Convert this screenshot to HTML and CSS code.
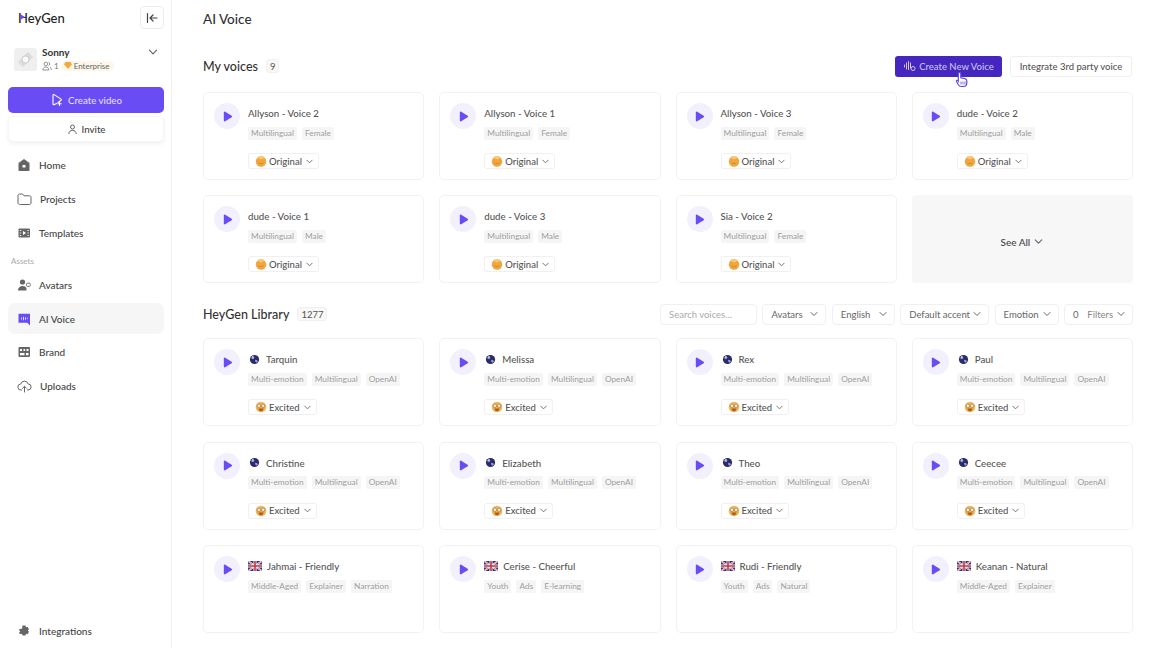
FILE: index.html
```html
<!DOCTYPE html>
<html lang="en">
<head>
<meta charset="utf-8">
<title>AI Voice - HeyGen</title>
<link rel="stylesheet" href="styles.css">
</head>
<body>
<svg class="defs" width="0" height="0" aria-hidden="true">
  <symbol id="play" viewBox="0 0 12 12"><path d="M2 1.600c0-.8.800-1.200 1.500-.8l7 4.400c.6.400.6 1.200 0 1.600l-7 4.400c-.7.400-1.500 0-1.500-.8z" fill="#6a4cf5"/></symbol>
  <symbol id="chev" viewBox="0 0 10 10"><path d="M2 3.500 5 6.500 8 3.500" fill="none" stroke="#666" stroke-width="1" stroke-linecap="round" stroke-linejoin="round"/></symbol>
  <symbol id="smile" viewBox="0 0 12 12"><circle cx="6" cy="6.500" r="5.200" fill="#f0a63c"/><path d="M2.400 2.800 3.800 1l2.200 1 2.200-1 1.400 1.800L6 4.400z" fill="#f7c878"/><path d="M3.500 7.800c1.400 1.200 3.600 1.200 5 0" fill="none" stroke="#c98428" stroke-width=".8"/></symbol>
  <symbol id="excited" viewBox="0 0 12 12"><circle cx="6" cy="6" r="5.300" fill="#f2b552"/><circle cx="3.900" cy="4.800" r="1.700" fill="#fff3d8" stroke="#8a6a40" stroke-width=".6"/><circle cx="8.100" cy="4.800" r="1.700" fill="#fff3d8" stroke="#8a6a40" stroke-width=".6"/><path d="M3.400 7.600h5.200C8.400 9.600 7 10.200 6 10.200s-2.400-.6-2.600-2.600z" fill="#a55a2a"/></symbol>
  <symbol id="globe" viewBox="0 0 12 12"><circle cx="6" cy="6" r="5" fill="#2c2a6b"/><path d="M2.500 3.500 5 2.600l1 1.600-1.500 1.400-1.700-.4zM6.600 6.400l2.400.4.800 1.400-1.800 1.400-1.200-1.400z" fill="#8fa3d8"/><circle cx="4.200" cy="3.200" r="1" fill="#c7cdea"/></symbol>
  <symbol id="flag" viewBox="0 0 14 10"><rect width="14" height="10" rx="1.200" fill="#27337a"/><path d="M0 0 14 10M14 0 0 10" stroke="#fff" stroke-width="1.800"/><path d="M0 0 14 10M14 0 0 10" stroke="#c8313e" stroke-width=".6"/><path d="M7 0v10M0 5h14" stroke="#fff" stroke-width="3"/><path d="M7 0v10M0 5h14" stroke="#c8313e" stroke-width="1.600"/></symbol>
</svg>
<div class="app">
  <aside class="sidebar">
    <div class="brandbar">
      <div class="logo">HeyGen<span class="logo-tri"></span></div>
      <button class="collapse"><svg width="14" height="14" viewBox="0 0 14 14"><path d="M2.500 2.500v9M12 7H5.500M8 4 5 7l3 3" fill="none" stroke="#444" stroke-width="1.200" stroke-linecap="round" stroke-linejoin="round"/></svg></button>
    </div>
    <div class="user">
      <div class="avatar"><svg width="23" height="23" viewBox="0 0 23 23"><rect width="23" height="23" fill="#efefef"/><path d="M14 4 19 9 9 19 4 14z" fill="#dcdcdc"/><circle cx="11.500" cy="11.500" r="3.600" fill="#fafafa" stroke="#c9c9c9"/></svg></div>
      <div class="user-info">
        <div class="user-name">Sonny</div>
        <div class="user-meta">
          <svg width="10" height="10" viewBox="0 0 10 10"><circle cx="3.800" cy="3" r="1.800" fill="none" stroke="#777" stroke-width=".8"/><path d="M.8 9c0-2 1.300-3 3-3s3 1 3 3zM6.500 1.300a1.800 1.800 0 0 1 0 3.400M8 6c.8.500 1.300 1.500 1.300 3" fill="none" stroke="#777" stroke-width=".8"/></svg>
          <span>1</span>
          <span class="plan"><svg width="8" height="7" viewBox="0 0 8 7"><path d="M1.500 0h5L8 2.200 4 7 0 2.200z" fill="#f4a93a"/></svg>Enterprise</span>
        </div>
      </div>
      <svg class="user-chev" width="12" height="12"><use href="#chev"/></svg>
    </div>
    <button class="create"><svg width="14" height="14" viewBox="0 0 14 14"><path d="M3 2.200c0-.6.600-.9 1.100-.6l7 4.500c.4.300.4.900 0 1.200L8 9.500M3 2.200V11c0 .6.500.9 1 .7l2.500-1.300" fill="none" stroke="#fff" stroke-width="1.100" stroke-linecap="round"/><path d="M9.500 9v3.400M7.800 10.700h3.400" stroke="#fff" stroke-width="1.100" stroke-linecap="round"/></svg>Create video</button>
    <button class="invite"><svg width="11" height="11" viewBox="0 0 11 11"><circle cx="5.500" cy="3" r="2" fill="none" stroke="#555" stroke-width=".9"/><path d="M1.800 10c0-2.400 1.600-3.600 3.700-3.600S9.200 7.600 9.200 10" fill="none" stroke="#555" stroke-width=".9"/></svg>Invite</button>
    <nav class="nav">
      <a class="nav-item"><svg width="14" height="14" viewBox="0 0 14 14"><path d="M7 1 1.500 5v7c0 .6.400 1 1 1h9c.6 0 1-.4 1-1V5z" fill="#666"/><rect x="5.500" y="7" width="3" height="2.500" rx=".5" fill="#fff"/></svg>Home</a>
      <a class="nav-item"><svg width="15" height="14" viewBox="0 0 15 14"><path d="M1 3.500c0-.8.600-1.500 1.500-1.500h3l1.500 1.800h5.500c.8 0 1.500.7 1.500 1.500v5.700c0 .8-.7 1.500-1.500 1.500h-9C1.600 12.500 1 11.800 1 11z" fill="none" stroke="#666" stroke-width="1"/></svg>Projects</a>
      <a class="nav-item"><svg width="14" height="14" viewBox="0 0 14 14"><rect x="1.500" y="2.500" width="11.500" height="9" rx="1" fill="#666"/><path d="M6 5v4l3-2z" fill="#fff"/><path d="M2.800 4.500h1.400M2.800 7h1.400M2.800 9.500h1.400M10.500 4.500h1.300M10.500 7h1.300M10.500 9.500h1.300" stroke="#fff" stroke-width=".9"/></svg>Templates</a>
      <div class="nav-label">Assets</div>
      <a class="nav-item"><svg width="14" height="14" viewBox="0 0 14 14"><circle cx="5.500" cy="4" r="2.600" fill="#666"/><path d="M1 12.500c0-3 2-4.500 4.500-4.500S9 9 9.500 10.500v2z" fill="#666"/><rect x="9.500" y="5.200" width="3.800" height="3.200" rx="1" fill="none" stroke="#666" stroke-width=".9"/></svg>Avatars</a>
      <a class="nav-item active"><svg width="14" height="14" viewBox="0 0 14 14"><path d="M1.500 1.800h11.500v11.700l-2.800-2.700H1.500z" fill="#6a4cf5"/><path d="M4.500 5.500v2M6.500 4.800v3.400M8.500 5.300v2.400M10.300 5.800v1.300" stroke="#fff" stroke-width=".8"/></svg>AI Voice</a>
      <a class="nav-item"><svg width="14" height="14" viewBox="0 0 14 14"><rect x="1.500" y="2" width="11.500" height="10" rx="1" fill="#666"/><path d="M3 4h2v2H3zM6.500 4h1.600v2H6.500zM9.500 4h2v2h-2zM3 8h4.500v2.300H3zM9 8h2.500v2.300H9z" fill="#fff"/></svg>Brand</a>
      <a class="nav-item"><svg width="15" height="14" viewBox="0 0 15 14"><path d="M4.500 11H4A3 3 0 0 1 3.700 5 3.900 3.900 0 0 1 11.200 5 3 3 0 0 1 11 11h-.5" fill="none" stroke="#666" stroke-width="1" stroke-linecap="round"/><path d="M7.500 13V7.500M5.500 9.300l2-2 2 2" fill="none" stroke="#666" stroke-width="1" stroke-linecap="round"/></svg>Uploads</a>
    </nav>
    <a class="nav-item bottom"><svg width="14" height="14" viewBox="0 0 14 14"><path d="M5.500 1.500h3l.4 1.700 1.600-.5 1.500 2.600-1.200 1.200 1.200 1.200-1.500 2.600-1.600-.5-.4 1.700h-3L5 9.800c-1.500.6-2.500 0-3-1l1.200-1.300L2 6c.5-1 1.500-1.600 3-1z" fill="#666"/></svg>Integrations</a>
  </aside>

  <main class="main">
    <h1 class="title">AI Voice</h1>

    <section>
      <div class="section-head head-one">
        <h2>My voices</h2><span class="count">9</span>
        <div class="actions">
          <button class="btn-primary"><svg width="14" height="12" viewBox="0 0 14 12"><path d="M1.500 5v2M3.500 3v6M5.500 1.500v8M7.500 3v5" stroke="#cfc6ff" stroke-width="1" stroke-linecap="round"/><circle cx="10" cy="8.500" r="2" fill="none" stroke="#cfc6ff"/></svg>Create New Voice</button>
          <button class="btn-plain">Integrate 3rd party voice</button>
        </div>
      </div>
      <div class="grid">
        <article class="card"><div class="play"><svg width="11" height="11"><use href="#play"/></svg></div><div class="body"><div class="name">Allyson - Voice 2</div><div class="tags"><span class="tag">Multilingual</span><span class="tag">Female</span></div><div class="select"><svg width="12" height="12"><use href="#smile"/></svg>Original<svg width="9" height="9"><use href="#chev"/></svg></div></div></article>
        <article class="card"><div class="play"><svg width="11" height="11"><use href="#play"/></svg></div><div class="body"><div class="name">Allyson - Voice 1</div><div class="tags"><span class="tag">Multilingual</span><span class="tag">Female</span></div><div class="select"><svg width="12" height="12"><use href="#smile"/></svg>Original<svg width="9" height="9"><use href="#chev"/></svg></div></div></article>
        <article class="card"><div class="play"><svg width="11" height="11"><use href="#play"/></svg></div><div class="body"><div class="name">Allyson - Voice 3</div><div class="tags"><span class="tag">Multilingual</span><span class="tag">Female</span></div><div class="select"><svg width="12" height="12"><use href="#smile"/></svg>Original<svg width="9" height="9"><use href="#chev"/></svg></div></div></article>
        <article class="card"><div class="play"><svg width="11" height="11"><use href="#play"/></svg></div><div class="body"><div class="name">dude - Voice 2</div><div class="tags"><span class="tag">Multilingual</span><span class="tag">Male</span></div><div class="select"><svg width="12" height="12"><use href="#smile"/></svg>Original<svg width="9" height="9"><use href="#chev"/></svg></div></div></article>
        <article class="card"><div class="play"><svg width="11" height="11"><use href="#play"/></svg></div><div class="body"><div class="name">dude - Voice 1</div><div class="tags"><span class="tag">Multilingual</span><span class="tag">Male</span></div><div class="select"><svg width="12" height="12"><use href="#smile"/></svg>Original<svg width="9" height="9"><use href="#chev"/></svg></div></div></article>
        <article class="card"><div class="play"><svg width="11" height="11"><use href="#play"/></svg></div><div class="body"><div class="name">dude - Voice 3</div><div class="tags"><span class="tag">Multilingual</span><span class="tag">Male</span></div><div class="select"><svg width="12" height="12"><use href="#smile"/></svg>Original<svg width="9" height="9"><use href="#chev"/></svg></div></div></article>
        <article class="card"><div class="play"><svg width="11" height="11"><use href="#play"/></svg></div><div class="body"><div class="name">Sia - Voice 2</div><div class="tags"><span class="tag">Multilingual</span><span class="tag">Female</span></div><div class="select"><svg width="12" height="12"><use href="#smile"/></svg>Original<svg width="9" height="9"><use href="#chev"/></svg></div></div></article>
        <div class="see-all">See All<svg width="11" height="11"><use href="#chev"/></svg></div>
      </div>
    </section>

    <section>
      <div class="section-head head-two">
        <h2>HeyGen Library</h2><span class="count">1277</span>
        <div class="filters">
          <div class="filter search">Search voices...</div>
          <div class="filter avatars">Avatars<svg width="10" height="10"><use href="#chev"/></svg></div>
          <div class="filter english">English<svg width="10" height="10"><use href="#chev"/></svg></div>
          <div class="filter accent">Default accent<svg width="10" height="10"><use href="#chev"/></svg></div>
          <div class="filter emotion">Emotion<svg width="10" height="10"><use href="#chev"/></svg></div>
          <div class="filter more"><span class="zero">0</span>Filters<svg width="10" height="10"><use href="#chev"/></svg></div>
        </div>
      </div>
      <div class="grid">
        <article class="card"><div class="play"><svg width="11" height="11"><use href="#play"/></svg></div><div class="body"><div class="name"><svg class="globe" width="11" height="11"><use href="#globe"/></svg>Tarquin</div><div class="tags"><span class="tag">Multi-emotion</span><span class="tag">Multilingual</span><span class="tag">OpenAI</span></div><div class="select"><svg width="12" height="12"><use href="#excited"/></svg>Excited<svg width="9" height="9"><use href="#chev"/></svg></div></div></article>
        <article class="card"><div class="play"><svg width="11" height="11"><use href="#play"/></svg></div><div class="body"><div class="name"><svg class="globe" width="11" height="11"><use href="#globe"/></svg>Melissa</div><div class="tags"><span class="tag">Multi-emotion</span><span class="tag">Multilingual</span><span class="tag">OpenAI</span></div><div class="select"><svg width="12" height="12"><use href="#excited"/></svg>Excited<svg width="9" height="9"><use href="#chev"/></svg></div></div></article>
        <article class="card"><div class="play"><svg width="11" height="11"><use href="#play"/></svg></div><div class="body"><div class="name"><svg class="globe" width="11" height="11"><use href="#globe"/></svg>Rex</div><div class="tags"><span class="tag">Multi-emotion</span><span class="tag">Multilingual</span><span class="tag">OpenAI</span></div><div class="select"><svg width="12" height="12"><use href="#excited"/></svg>Excited<svg width="9" height="9"><use href="#chev"/></svg></div></div></article>
        <article class="card"><div class="play"><svg width="11" height="11"><use href="#play"/></svg></div><div class="body"><div class="name"><svg class="globe" width="11" height="11"><use href="#globe"/></svg>Paul</div><div class="tags"><span class="tag">Multi-emotion</span><span class="tag">Multilingual</span><span class="tag">OpenAI</span></div><div class="select"><svg width="12" height="12"><use href="#excited"/></svg>Excited<svg width="9" height="9"><use href="#chev"/></svg></div></div></article>
        <article class="card"><div class="play"><svg width="11" height="11"><use href="#play"/></svg></div><div class="body"><div class="name"><svg class="globe" width="11" height="11"><use href="#globe"/></svg>Christine</div><div class="tags"><span class="tag">Multi-emotion</span><span class="tag">Multilingual</span><span class="tag">OpenAI</span></div><div class="select"><svg width="12" height="12"><use href="#excited"/></svg>Excited<svg width="9" height="9"><use href="#chev"/></svg></div></div></article>
        <article class="card"><div class="play"><svg width="11" height="11"><use href="#play"/></svg></div><div class="body"><div class="name"><svg class="globe" width="11" height="11"><use href="#globe"/></svg>Elizabeth</div><div class="tags"><span class="tag">Multi-emotion</span><span class="tag">Multilingual</span><span class="tag">OpenAI</span></div><div class="select"><svg width="12" height="12"><use href="#excited"/></svg>Excited<svg width="9" height="9"><use href="#chev"/></svg></div></div></article>
        <article class="card"><div class="play"><svg width="11" height="11"><use href="#play"/></svg></div><div class="body"><div class="name"><svg class="globe" width="11" height="11"><use href="#globe"/></svg>Theo</div><div class="tags"><span class="tag">Multi-emotion</span><span class="tag">Multilingual</span><span class="tag">OpenAI</span></div><div class="select"><svg width="12" height="12"><use href="#excited"/></svg>Excited<svg width="9" height="9"><use href="#chev"/></svg></div></div></article>
        <article class="card"><div class="play"><svg width="11" height="11"><use href="#play"/></svg></div><div class="body"><div class="name"><svg class="globe" width="11" height="11"><use href="#globe"/></svg>Ceecee</div><div class="tags"><span class="tag">Multi-emotion</span><span class="tag">Multilingual</span><span class="tag">OpenAI</span></div><div class="select"><svg width="12" height="12"><use href="#excited"/></svg>Excited<svg width="9" height="9"><use href="#chev"/></svg></div></div></article>
        <article class="card"><div class="play"><svg width="11" height="11"><use href="#play"/></svg></div><div class="body"><div class="name"><svg class="flag" width="14" height="10"><use href="#flag"/></svg>Jahmai - Friendly</div><div class="tags"><span class="tag">Middle-Aged</span><span class="tag">Explainer</span><span class="tag">Narration</span></div></div></article>
        <article class="card"><div class="play"><svg width="11" height="11"><use href="#play"/></svg></div><div class="body"><div class="name"><svg class="flag" width="14" height="10"><use href="#flag"/></svg>Cerise - Cheerful</div><div class="tags"><span class="tag">Youth</span><span class="tag">Ads</span><span class="tag">E-learning</span></div></div></article>
        <article class="card"><div class="play"><svg width="11" height="11"><use href="#play"/></svg></div><div class="body"><div class="name"><svg class="flag" width="14" height="10"><use href="#flag"/></svg>Rudi - Friendly</div><div class="tags"><span class="tag">Youth</span><span class="tag">Ads</span><span class="tag">Natural</span></div></div></article>
        <article class="card"><div class="play"><svg width="11" height="11"><use href="#play"/></svg></div><div class="body"><div class="name"><svg class="flag" width="14" height="10"><use href="#flag"/></svg>Keanan - Natural</div><div class="tags"><span class="tag">Middle-Aged</span><span class="tag">Explainer</span></div></div></article>
      </div>
    </section>
  </main>
</div>
<svg class="cursor" width="14" height="17" viewBox="0 0 14 17"><path d="M4.500 1.500c.8 0 1.300.5 1.300 1.300v4l4 .8c1.300.3 2 1 2 2.200v2.200c0 2-1.500 3.500-3.500 3.500H6.500c-1.500 0-2.500-.7-3.200-1.800L1.500 10.500c-.4-.8.700-1.700 1.500-.8l.3.400V2.800c0-.8.500-1.300 1.200-1.300z" fill="#fff" stroke="#5b45e0" stroke-width="1.200"/><path d="M6 10.500v3M8 10.500v3M10 10.500v3" stroke="#5b45e0" stroke-width=".8"/></svg>
</body>
</html>
```
FILE: styles.css
```css
* { box-sizing: border-box; }
html, body { margin: 0; height: 100%; }
body {
  position: relative;
  width: 1152px;
  height: 648px;
  overflow: hidden;
  background: #fff;
  color: #3f3f46;
  font-family: "Lato", "Liberation Sans", sans-serif;
  font-size: 10px;
}
h1, h2 { margin: 0; }
button { font-family: inherit; cursor: pointer; }
svg { flex: none; display: block; }
.defs { position: absolute; }

.app { display: flex; height: 648px; }

/* Sidebar */
.sidebar {
  width: 172px;
  flex: none;
  display: flex;
  flex-direction: column;
  padding: 6px 7px 0 8px;
  border-right: 1px solid #f0f0f0;
  background: #fff;
}
.brandbar { display: flex; align-items: center; justify-content: space-between; height: 23px; padding-left: 10px; }
.logo { position: relative; font-size: 13px; font-weight: 500; color: #222; line-height: 16px; }
.logo-tri {
  position: absolute; left: 2px; top: 4px; width: 0; height: 0;
  border-left: 5px solid #6a4cf5; border-top: 3px solid transparent; border-bottom: 3px solid transparent;
}
.collapse {
  width: 24px; height: 23px; padding: 0;
  display: flex; align-items: center; justify-content: center;
  border: 1px solid #ececec; border-radius: 4px; background: #fff;
}
.user { display: flex; align-items: center; height: 26px; margin-top: 17px; padding-left: 6px; }
.avatar { width: 23px; height: 23px; border-radius: 3px; overflow: hidden; flex: none; }
.user-info { margin-left: 5px; flex: 1; margin-top: -2px; }
.user-name { font-size: 10px; font-weight: 700; color: #333; line-height: 12px; }
.user-meta { display: flex; align-items: center; gap: 2px; margin-top: 3px; font-size: 8px; color: #777; line-height: 10px; }
.plan { display: flex; align-items: center; gap: 2px; background: #fdf7ea; border-radius: 5px; padding: 0 4px 0 3px; color: #666; }
.user-chev { margin-right: 5px; margin-top: -14px; }
.create {
  display: flex; align-items: center; justify-content: center; gap: 4px;
  width: 156px; height: 26px; margin-top: 15px;
  border: 0; border-radius: 5px; background: #6a4cf5; color: #e4defd; font-size: 9.700px; font-weight: 500;
}
.invite {
  display: flex; align-items: center; justify-content: center; gap: 4px;
  width: 156px; height: 26px; margin-top: 3px;
  border: 1px solid #f6f6f6; border-radius: 5px; background: #fff; color: #444; font-size: 9.700px; font-weight: 500;
  box-shadow: 0 2px 4px rgba(0,0,0,.06);
}
.nav { margin-top: 6px; flex: 1; display: flex; flex-direction: column; }
.nav-item {
  display: flex; align-items: center; gap: 8px;
  height: 34px; padding-left: 9px;
  border-radius: 7px; color: #444; font-size: 10px; font-weight: 500;
}
.nav-item.active { background: #f6f6f6; height: 31px; margin: 1px 0 1px; }
.nav-label { font-size: 8px; color: #aaa; height: 11px; line-height: 11px; margin: 6px 0 1px 3px; }
.bottom { height: 34px; margin-bottom: 0; }

/* Main */
.main { flex: 1; padding: 0 19px 0 31px; min-width: 0; }
.title { height: 38px; line-height: 38px; font-size: 13.500px; font-weight: 500; color: #333; }
.section-head { display: flex; align-items: center; height: 20px; }
.section-head h2 { font-size: 12.500px; font-weight: 500; color: #333; }
.head-one { margin: 18px 0 16px; }
.head-two { margin: 21px 0 14px; }
.count {
  margin-left: 8px; padding: 0 3px; height: 14px; line-height: 14px; min-width: 12px; text-align: center;
  border: 1px solid #f0f0f0; border-radius: 3px; background: #f8f8f8; font-size: 9.500px; color: #555;
}
.actions { margin-left: auto; display: flex; gap: 8px; margin-right: 1px; }
.btn-primary {
  display: flex; align-items: center; gap: 2px; justify-content: center;
  width: 107px; height: 21px; border: 0; border-radius: 3px; background: #4527bf; color: #c9c0f5; font-size: 9.500px; font-weight: 500;
}
.btn-plain {
  width: 122px; height: 21px; border: 1px solid #efefef; border-radius: 3px; background: #fff; color: #555; font-size: 9.500px; font-weight: 500; padding: 0;
}
.filters { margin-left: auto; display: flex; gap: 5.400px; }
.filter {
  display: flex; align-items: center; justify-content: space-between;
  height: 21px; padding: 0 6px 0 8px;
  border: 1px solid #f0f0f0; border-radius: 4px; color: #666; font-size: 9.500px;
}
.search { width: 97px; color: #aaa; }
.avatars { width: 64px; }
.english { width: 63px; }
.accent { width: 89px; }
.emotion { width: 64px; }
.more { width: 69px; color: #888; }
.zero { margin-right: 6px; color: #666; }

.grid { display: grid; grid-template-columns: repeat(4, 1fr); grid-auto-rows: 88px; gap: 15.400px 15px; }
.card {
  display: flex; gap: 8px;
  padding: 10px 10px 0;
  border: 1px solid #f2f2f2; border-radius: 5px; background: #fff;
}
.play {
  width: 26px; height: 26px; flex: none;
  display: flex; align-items: center; justify-content: center;
  border-radius: 50%; background: #f2f0fd;
}
.body { min-width: 0; }
.name { display: flex; align-items: center; height: 12px; margin-top: 4px; font-size: 9.700px; font-weight: 500; color: #555; }
.globe { margin: 0 6px 0 1px; }
.flag { margin-right: 5px; }
.tags { display: flex; gap: 5px; margin-top: 7.500px; }
.tag { height: 13px; line-height: 13px; padding: 0 3px; border-radius: 2px; background: #f5f5f5; color: #a0a0a0; font-size: 8.300px; }
.select {
  display: inline-flex; align-items: center; gap: 2px;
  height: 16px; margin-top: 13.500px; padding: 0 4px 0 6px;
  border: 1px solid #f0f0f0; border-radius: 3px; font-size: 9.500px; font-weight: 500; color: #555;
}
.select svg:last-child { margin-left: 1px; }
.see-all {
  display: flex; align-items: center; justify-content: center; gap: 3px; padding-top: 5px;
  border-radius: 3px; background: #f7f7f7; color: #444; font-size: 10px; font-weight: 500;
}

.cursor { position: absolute; left: 955px; top: 71px; }
```
